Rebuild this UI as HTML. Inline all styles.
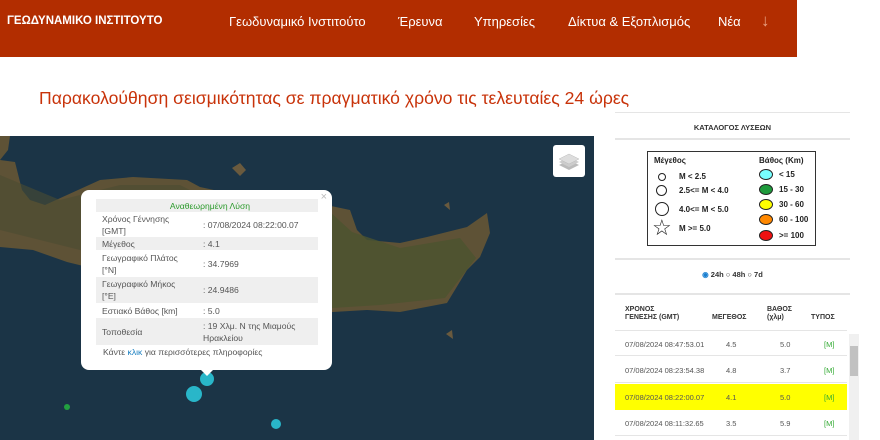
<!DOCTYPE html>
<html><head><meta charset="utf-8"><style>
*{margin:0;padding:0;box-sizing:border-box}
body{width:880px;height:440px;overflow:hidden;background:#fff;font-family:"Liberation Sans",sans-serif;position:relative}
.hdr{position:absolute;left:0;top:0;width:797px;height:57px;background:#b22d00;color:#fff}
.hdr span{position:absolute;top:14px;font-size:13px}
h1{position:absolute;left:39px;top:88px;font-size:17.6px;font-weight:normal;color:#c8330a;white-space:nowrap}
.map{position:absolute;left:0;top:136px;width:594px;height:304px;background:#1b3446;overflow:hidden}
.pop{position:absolute;left:81px;top:190px;width:251px;height:180px;background:#fff;border-radius:8px;font-size:8.6px;color:#555}
.pop table{position:absolute;left:15px;top:9px;width:222px;border-collapse:collapse}
.pop td{padding:0 0 0 6px;vertical-align:middle;line-height:12px}
.pop tr:nth-child(odd) td{background:#efefef}
.rp{position:absolute;left:615px;width:235px}
.tbl{position:absolute;left:615px;top:296px;width:232px;font-size:7.5px;color:#555}
.row{position:absolute;left:0;width:232px;height:26px;border-bottom:1px solid #e5e5e5}
.row span{position:absolute;top:9px}
.th{position:absolute;font-size:7px;line-height:8px;color:#333;font-weight:bold}
</style></head><body>
<div class="hdr">
<span style="left:7px;font-weight:bold;font-size:11.5px;top:15px">ΓΕΩΔΥΝΑΜΙΚΟ ΙΝΣΤΙΤΟΥΤΟ</span>
<span style="left:229px">Γεωδυναμικό Ινστιτούτο</span>
<span style="left:398px">Έρευνα</span>
<span style="left:474px">Υπηρεσίες</span>
<span style="left:568px">Δίκτυα &amp; Εξοπλισμός</span>
<span style="left:718px">Νέα</span>
<span style="left:761px;font-size:17px;top:11px;color:#e9a080">↓</span>
</div>
<h1>Παρακολούθηση σεισμικότητας σε πραγματικό χρόνο τις τελευταίες 24 ώρες</h1>
<div class="map">
<svg width="594" height="304" viewBox="0 136 594 304">
<polygon fill="#5e5236" points="0,136 10,136 8,150 0,160 15,162 22,190 30,200 45,205 67,195 100,180 133,177 187,180 200,187 260,200 283,217 317,203 350,210 357,230 367,240 400,243 427,237 443,233 467,227 487,213 490,233 480,257 467,270 447,303 400,312 367,310 333,312 283,317 200,300 120,275 67,262 33,250 0,247"/>
<polygon fill="#4b5430" opacity=".8" points="290,222 330,212 352,232 400,248 460,238 476,258 445,298 380,305 300,310"/>
<polygon fill="#4b4d32" opacity=".6" points="0,175 60,200 120,185 180,185 200,195 200,260 120,260 40,240 0,230"/>
<polygon fill="#ddd" points="300,275 308,272 305,283 298,286"/>
<polygon fill="#6a5a3e" points="232,168 240,163 246,170 240,176"/>
<polygon fill="#6a5a3e" points="444,205 449,202 450,210"/>
<polygon fill="#6a5a3e" points="446,334 452,330 453,339"/>
<circle cx="207" cy="379" r="7" fill="#29b6c9"/>
<circle cx="194" cy="394" r="8" fill="#29b6c9"/>
<circle cx="276" cy="424" r="5" fill="#29b6c9"/>
<circle cx="67" cy="407" r="3" fill="#22a040"/>
</svg>
<div style="position:absolute;left:553px;top:9px;width:32px;height:32px;background:#fff;border-radius:3px">
<svg width="32" height="32" viewBox="0 0 32 32"><path d="M6 20 L16 25 L26 20 L16 15Z" fill="#bbb"/><path d="M6 17 L16 22 L26 17 L16 12Z" fill="#ccc"/><path d="M6 14 L16 19 L26 14 L16 9Z" fill="#ddd" stroke="#bbb" stroke-width=".5"/></svg>
</div>
</div>
<div class="pop">
<span style="position:absolute;right:5px;top:1px;color:#bbb;font-size:11px">×</span>
<table>
<tr style="height:13px"><td colspan="2" style="text-align:center;color:#2a9a2a">Αναθεωρημένη Λύση</td></tr>
<tr style="height:25px"><td style="width:101px">Χρόνος Γέννησης<br>[GMT]</td><td>: 07/08/2024 08:22:00.07</td></tr>
<tr style="height:13px"><td>Μέγεθος</td><td>: 4.1</td></tr>
<tr style="height:27px"><td>Γεωγραφικό Πλάτος<br>[°N]</td><td>: 34.7969</td></tr>
<tr style="height:26px"><td>Γεωγραφικό Μήκος<br>[°E]</td><td>: 24.9486</td></tr>
<tr style="height:15px"><td>Εστιακό Βάθος [km]</td><td>: 5.0</td></tr>
<tr style="height:27px"><td>Τοποθεσία</td><td>: 19 Χλμ. Ν της Μιαμούς<br>Ηρακλείου</td></tr>
</table>
<div style="position:absolute;left:22px;top:157px">Κάντε <span style="color:#1a7fc0">κλικ</span> για περισσότερες πληροφορίες</div>
</div>
<div style="position:absolute;left:200px;top:369px;width:0;height:0;border-left:7px solid transparent;border-right:7px solid transparent;border-top:7px solid #fff"></div>
<div class="rp" style="top:112px;border-top:1px solid #e5e5e5;height:28px;border-bottom:2px solid #e5e5e5;text-align:center;font-size:7.5px;font-weight:bold;color:#333;padding-top:10px">ΚΑΤΑΛΟΓΟΣ ΛΥΣΕΩΝ</div>
<div style="position:absolute;left:647px;top:151px;width:169px;height:95px;border:1px solid #333;font-size:8px;font-weight:bold;color:#222">
<span style="position:absolute;left:6px;top:4px">Μέγεθος</span>
<span style="position:absolute;left:111px;top:4px">Βάθος (Km)</span>
<span style="position:absolute;left:10px;top:21px;width:8px;height:8px;border:1px solid #222;border-radius:50%"></span><span style="position:absolute;left:31px;top:20px">M &lt; 2.5</span>
<span style="position:absolute;left:8px;top:33px;width:11px;height:11px;border:1px solid #222;border-radius:50%"></span><span style="position:absolute;left:31px;top:34px">2.5&lt;= M &lt; 4.0</span>
<span style="position:absolute;left:7px;top:50px;width:14px;height:14px;border:1px solid #222;border-radius:50%"></span><span style="position:absolute;left:31px;top:53px">4.0&lt;= M &lt; 5.0</span>
<span style="position:absolute;left:4px;top:63px;font-size:22px;font-weight:normal">☆</span><span style="position:absolute;left:31px;top:72px">M &gt;= 5.0</span>
<span style="position:absolute;left:111px;top:17px;width:14px;height:11px;border:1px solid #222;border-radius:50%;background:#7ff"></span><span style="position:absolute;left:131px;top:18px">&lt; 15</span>
<span style="position:absolute;left:111px;top:32px;width:14px;height:11px;border:1px solid #222;border-radius:50%;background:#1e9a3c"></span><span style="position:absolute;left:131px;top:33px">15 - 30</span>
<span style="position:absolute;left:111px;top:47px;width:14px;height:11px;border:1px solid #222;border-radius:50%;background:#ff0"></span><span style="position:absolute;left:131px;top:48px">30 - 60</span>
<span style="position:absolute;left:111px;top:62px;width:14px;height:11px;border:1px solid #222;border-radius:50%;background:#f80"></span><span style="position:absolute;left:131px;top:63px">60 - 100</span>
<span style="position:absolute;left:111px;top:78px;width:14px;height:11px;border:1px solid #222;border-radius:50%;background:#e11"></span><span style="position:absolute;left:131px;top:79px">&gt;= 100</span>
</div>
<div class="rp" style="top:258px;border-top:2px solid #e5e5e5;height:37px;border-bottom:2px solid #e5e5e5;text-align:center;font-size:7.5px;font-weight:bold;color:#333;padding-top:10px"><span style="color:#1a7fd0">◉</span> 24h ○ 48h ○ 7d</div>
<div class="tbl">
<div class="th" style="top:10px;left:10px">ΧΡΟΝΟΣ<br>ΓΕΝΕΣΗΣ (GMT)</div>
<div class="th" style="top:18px;left:97px">ΜΕΓΕΘΟΣ</div>
<div class="th" style="top:10px;left:152px">ΒΑΘΟΣ<br>(χλμ)</div>
<div class="th" style="top:18px;left:196px">ΤΥΠΟΣ</div>
<div class="row" style="top:34px;border-top:1px solid #e5e5e5"><span style="left:10px">07/08/2024 08:47:53.01</span><span style="left:111px">4.5</span><span style="left:165px">5.0</span><span style="left:209px;color:#3a3">[M]</span></div>
<div class="row" style="top:61px"><span style="left:10px">07/08/2024 08:23:54.38</span><span style="left:111px">4.8</span><span style="left:165px">3.7</span><span style="left:209px;color:#3a3">[M]</span></div>
<div class="row" style="top:88px;background:#ff0;border:none"><span style="left:10px">07/08/2024 08:22:00.07</span><span style="left:111px">4.1</span><span style="left:165px">5.0</span><span style="left:209px;color:#3a3">[M]</span></div>
<div class="row" style="top:114px"><span style="left:10px">07/08/2024 08:11:32.65</span><span style="left:111px">3.5</span><span style="left:165px">5.9</span><span style="left:209px;color:#3a3">[M]</span></div>
</div>
<div style="position:absolute;left:849px;top:334px;width:10px;height:106px;background:#f0f0f0"><div style="margin-top:12px;width:8px;margin-left:1px;height:30px;background:#c1c1c1"></div></div>
</body></html>
